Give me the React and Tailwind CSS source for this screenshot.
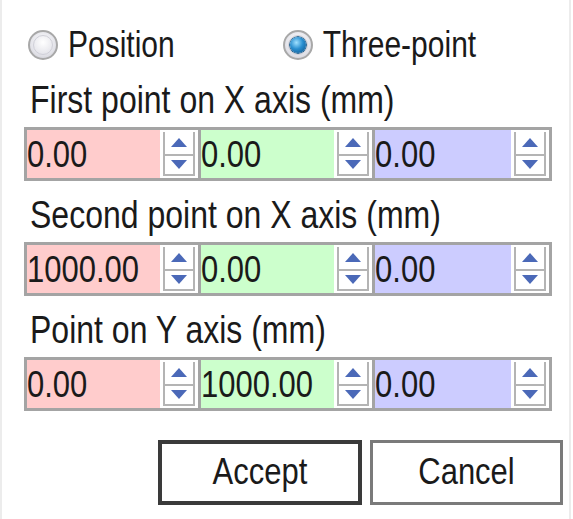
import React from "react";

function T({ children, className = "" }) {
  return <span className={`inline-block origin-center scale-y-[1.2] ${className}`}>{children}</span>;
}

function Radio({ checked }) {
  return (
    <span className="relative inline-flex h-[30px] w-[30px] items-center justify-center rounded-full border-[2px] border-[#a8a8a8] bg-[radial-gradient(circle_at_50%_40%,#ffffff_0%,#e4e4ea_60%,#c9c9d0_100%)]">
      <span className="absolute inset-[3px] rounded-full border border-[#d0d0d8]" />
      {checked && (
        <span className="h-[16px] w-[16px] rounded-full bg-[radial-gradient(circle_at_40%_35%,#9fe0ff_0%,#2a8fd0_45%,#0b4f86_100%)] shadow-[0_0_0_1px_#1d5f8f]" />
      )}
    </span>
  );
}

function Spinner() {
  return (
    <div className="flex h-full w-[38px] shrink-0 flex-col items-center justify-center bg-white py-[2px]">
      <div className="flex h-[25px] w-[32px] items-center justify-center border-x-[2px] border-b-[2px] border-[#b4b4b4]">
        <svg width="16" height="9" viewBox="0 0 16 9">
          <polygon points="8,0 16,9 0,9" fill="#4b69b8" />
        </svg>
      </div>
      <div className="flex h-[21px] w-[32px] items-center justify-center border-x-[2px] border-b-[2px] border-[#b4b4b4]">
        <svg width="16" height="9" viewBox="0 0 16 9">
          <polygon points="0,0 16,0 8,9" fill="#4b69b8" />
        </svg>
      </div>
    </div>
  );
}

function Field({ value, bg }) {
  return (
    <div className={`flex h-full w-[176px] items-center ${bg} border-r-[3px] border-[#a4a4a4] last:border-r-0`}>
      <span className="flex-1 pl-0 text-[31px] leading-none text-[#1a1a1a]">
        <T>{value}</T>
      </span>
      <Spinner />
    </div>
  );
}

function Row({ values }) {
  return (
    <div className="ml-[22px] flex h-[54px] w-[528px] border-[3px] border-[#a4a4a4]">
      <Field value={values[0]} bg="bg-[#ffcccc]" />
      <Field value={values[1]} bg="bg-[#ccffcc]" />
      <Field value={values[2]} bg="bg-[#ccccff]" />
    </div>
  );
}

function Label({ children }) {
  return (
    <div className="ml-[28px] text-[32px] leading-[31px] text-[#1a1a1a]">
      <T>{children}</T>
    </div>
  );
}

export default function App() {
  return (
    <div
      className="h-[519px] w-[573px] overflow-hidden bg-white"
      style={{ fontFamily: '"Liberation Sans", Arial, sans-serif' }}
    >
      <div className="flex h-full w-[571px] flex-col border-l-[2px] border-r-[2px] border-[#ececec]">
        <div className="mt-[30px] flex items-center text-[30px] leading-none text-[#1a1a1a]">
          <div className="ml-[26px] flex items-center gap-[10px]">
            <Radio />
            <T>Position</T>
          </div>
          <div className="ml-[108px] flex items-center gap-[10px]">
            <Radio checked />
            <T>Three-point</T>
          </div>
        </div>
        <div className="mt-[25px]"><Label>First point on X axis (mm)</Label></div>
        <div className="mt-[11px]"><Row values={["0.00", "0.00", "0.00"]} /></div>
        <div className="mt-[19px]"><Label>Second point on X axis (mm)</Label></div>
        <div className="mt-[11px]"><Row values={["1000.00", "0.00", "0.00"]} /></div>
        <div className="mt-[19px]"><Label>Point on Y axis (mm)</Label></div>
        <div className="mt-[11px]"><Row values={["0.00", "1000.00", "0.00"]} /></div>
        <div className="mt-[29px] flex gap-[8px] pl-[156px]">
          <button className="h-[65px] w-[204px] border-[4px] border-[#3a3a3a] bg-white text-[31px] text-[#1a1a1a]">
            <T>Accept</T>
          </button>
          <button className="h-[65px] w-[193px] border-[3px] border-[#7a7a7a] bg-white text-[31px] text-[#1a1a1a]">
            <T>Cancel</T>
          </button>
        </div>
      </div>
    </div>
  );
}
